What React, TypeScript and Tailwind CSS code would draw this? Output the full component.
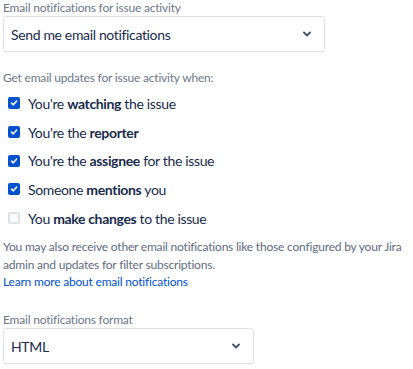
import React from "react";

const options = [
  { pre: "You're ", bold: "watching", post: " the issue", checked: true },
  { pre: "You're the ", bold: "reporter", post: "", checked: true },
  { pre: "You're the ", bold: "assignee", post: " for the issue", checked: true },
  { pre: "Someone ", bold: "mentions", post: " you", checked: true },
  { pre: "You ", bold: "make changes", post: " to the issue", checked: false },
];

function Chevron() {
  return (
    <svg width="8" height="6" viewBox="0 0 8 6" className="text-[#42526E]">
      <path d="M1 1.5 L4 4.5 L7 1.5" fill="none" stroke="currentColor" strokeWidth="1.8" strokeLinecap="round" strokeLinejoin="round" />
    </svg>
  );
}

function Select({ value, width }: { value: string; width: string }) {
  return (
    <div className={`${width} h-9 border border-[#DFE1E6] rounded-[3px] bg-white flex items-center justify-between pl-[7px] pr-[13px]`}>
      <span className="text-[14px] tracking-[-0.35px] text-[#172B4D]">{value}</span>
      <Chevron />
    </div>
  );
}

function Box({ checked }: { checked: boolean }) {
  if (!checked)
    return <div className="w-[12px] h-[12px] rounded-[2px] border-2 border-[#DFE1E6] bg-[#FAFBFC]" />;
  return (
    <div className="w-[12px] h-[12px] rounded-[2px] bg-[#0052CC] flex items-center justify-center">
      <svg width="8" height="8" viewBox="0 0 8 8">
        <path d="M1.5 4.2 L3.3 5.8 L6.5 2.2" fill="none" stroke="white" strokeWidth="1.6" strokeLinecap="round" strokeLinejoin="round" />
      </svg>
    </div>
  );
}

export default function App() {
  return (
    <div className="w-[413px] h-[369px] bg-white pl-[3px] overflow-hidden" style={{ fontFamily: "Lato, sans-serif" }}>
      <div className="text-[12px] tracking-[-0.2px] text-[#6B778C] leading-[16px]">Email notifications for issue activity</div>
      <Select value="Send me email notifications" width="w-[322px]" />

      <div className="mt-[18px] text-[12px] tracking-[-0.2px] text-[#6B778C] leading-[16px]">Get email updates for issue activity when:</div>
      <div className="mt-[3px] flex flex-col">
        {options.map((o) => (
          <div key={o.bold} className="h-[28.7px] flex items-center pl-[5px] gap-[8px]">
            <Box checked={o.checked} />
            <span className="text-[14px] tracking-[-0.35px] text-[#172B4D]">
              {o.pre}
              <b className="font-bold">{o.bold}</b>
              {o.post}
            </span>
          </div>
        ))}
      </div>

      <p className="mt-[6px] text-[12px] tracking-[-0.2px] leading-[18px] text-[#5E6C84]">
        You may also receive other email notifications like those configured by your Jira admin and updates for filter subscriptions.
      </p>
      <a className="block text-[12px] tracking-[-0.2px] leading-[16px] text-[#0052CC]">Learn more about email notifications</a>

      <div className="mt-[22px] text-[12px] tracking-[-0.2px] text-[#6B778C] leading-[16px]">Email notifications format</div>
      <Select value="HTML" width="w-[251px]" />
    </div>
  );
}
